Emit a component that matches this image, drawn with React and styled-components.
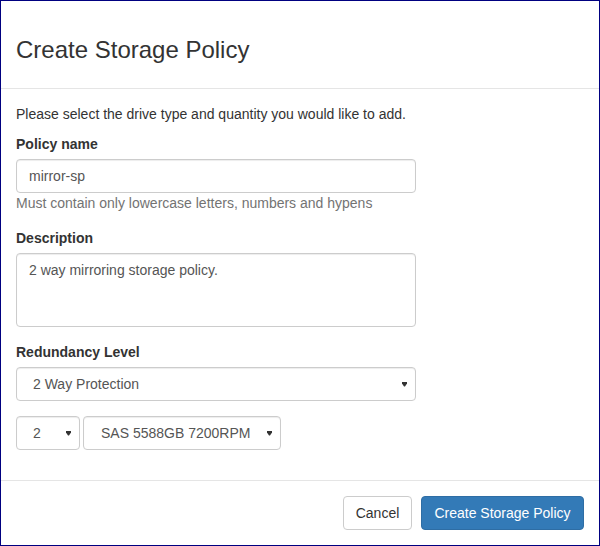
import React from 'react';
import styled, { createGlobalStyle } from 'styled-components';

const GlobalStyle = createGlobalStyle`
  * {
    box-sizing: border-box;
  }
  body {
    margin: 0;
    font-family: "Liberation Sans", Arial, sans-serif;
    font-size: 14px;
    line-height: 20px;
    color: #333;
    background: #fff;
  }
`;

const Frame = styled.div`
  width: 600px;
  height: 546px;
  border: 1px solid #000080;
  display: flex;
  flex-direction: column;
  background: #fff;
`;

const Header = styled.div`
  padding: 36px 15px 25px 15px;
  border-bottom: 1px solid #e5e5e5;
`;

const Title = styled.h4`
  margin: 0;
  font-size: 24px;
  font-weight: 400;
  line-height: 26px;
  color: #333;
`;

const Body = styled.div`
  flex: 1;
  padding: 15px;
`;

const Intro = styled.p`
  margin: 0 0 10px 0;
`;

const Group = styled.div`
  margin-bottom: 15px;
`;

const Label = styled.label`
  display: block;
  font-weight: 700;
  margin-bottom: 5px;
`;

const Field = styled.div`
  width: ${(p) => p.$width || 400}px;
  height: ${(p) => p.$height || 34}px;
  padding: 6px 12px;
  border: 1px solid #ccc;
  border-radius: 4px;
  color: #555;
  box-shadow: inset 0 1px 1px rgba(0, 0, 0, 0.075);
  background: #fff;
`;

const Help = styled.div`
  color: #737373;
`;

const SelectBox = styled.div`
  width: ${(p) => p.$width || 400}px;
  height: 34px;
  display: flex;
  align-items: center;
  justify-content: space-between;
  padding: 0 8px 0 ${(p) => p.$padLeft || 16}px;
  border: 1px solid #ccc;
  border-radius: 4px;
  color: #555;
  background: #fff;
  box-shadow: inset 0 1px 1px rgba(0, 0, 0, 0.075);
`;

const SelectRow = styled.div`
  display: flex;
  gap: 3px;
  margin-bottom: 15px;
`;

const Footer = styled.div`
  display: flex;
  justify-content: flex-end;
  gap: 9px;
  padding: 15px;
  border-top: 1px solid #e5e5e5;
`;

const Button = styled.button`
  width: ${(p) => p.$width}px;
  height: 34px;
  padding: 6px 0;
  font-family: inherit;
  font-size: 14px;
  line-height: 20px;
  text-align: center;
  border-radius: 4px;
  border: 1px solid ${(p) => (p.$primary ? '#2e6da4' : '#ccc')};
  background: ${(p) => (p.$primary ? '#337ab7' : '#fff')};
  color: ${(p) => (p.$primary ? '#fff' : '#333')};
  cursor: pointer;
`;

const Caret = () => (
  <svg width="5" height="5" viewBox="0 0 5 5">
    <path d="M0 0 L5 0 L5 1.5 L3 4.5 L2 4.5 L0 1.5 Z" fill="#333" />
  </svg>
);

const Select = ({ value, width, padLeft }) => (
  <SelectBox $width={width} $padLeft={padLeft}>
    <span>{value}</span>
    <Caret />
  </SelectBox>
);

const App = () => (
  <>
    <GlobalStyle />
    <Frame>
      <Header>
        <Title>Create Storage Policy</Title>
      </Header>

      <Body>
        <Intro>Please select the drive type and quantity you would like to add.</Intro>

        <Group>
          <Label>Policy name</Label>
          <Field>mirror-sp</Field>
          <Help>Must contain only lowercase letters, numbers and hypens</Help>
        </Group>

        <Group>
          <Label>Description</Label>
          <Field $height={74}>2 way mirroring storage policy.</Field>
        </Group>

        <Group>
          <Label>Redundancy Level</Label>
          <Select value="2 Way Protection" />
        </Group>

        <SelectRow>
          <Select value="2" width={64} padLeft={16} />
          <Select value="SAS 5588GB 7200RPM" width={198} padLeft={17} />
        </SelectRow>
      </Body>

      <Footer>
        <Button $width={69}>Cancel</Button>
        <Button $primary $width={163}>Create Storage Policy</Button>
      </Footer>
    </Frame>
  </>
);

export default App;
